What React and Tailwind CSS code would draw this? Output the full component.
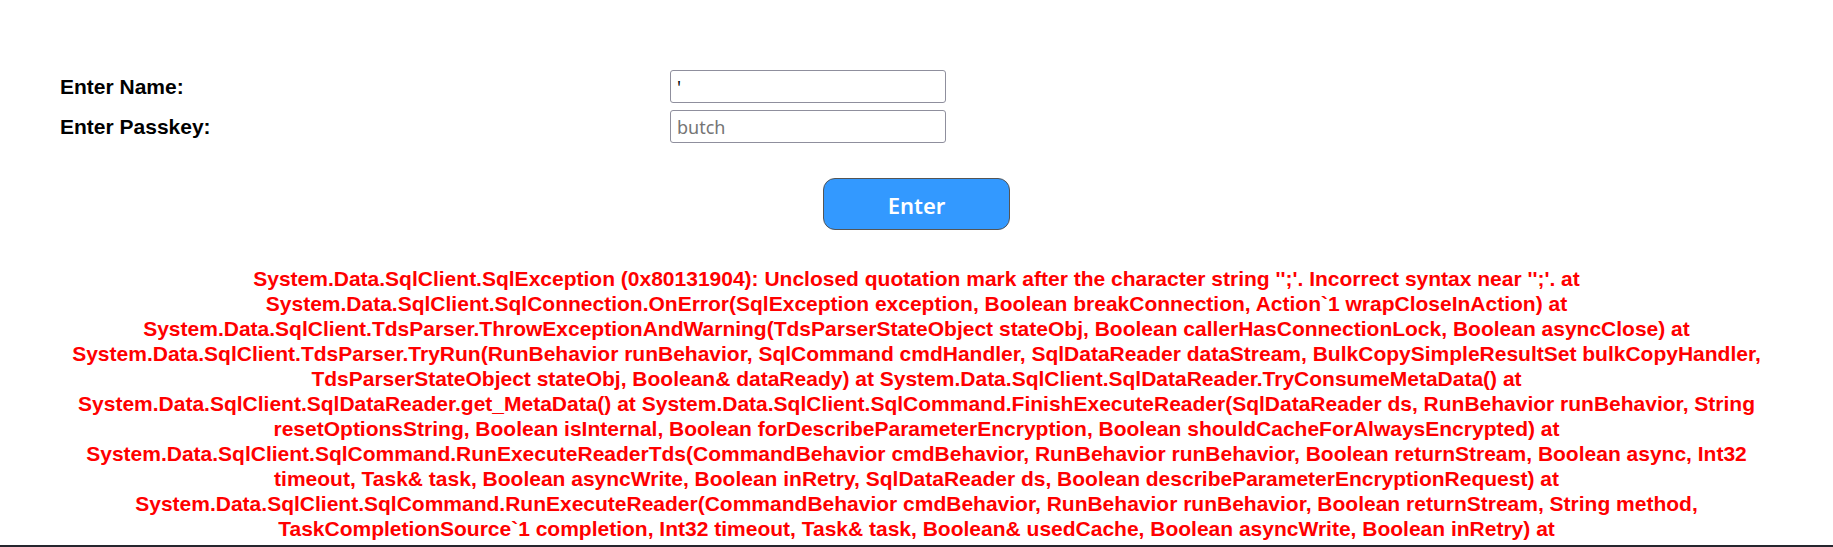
import React from 'react';

const errorText =
  "System.Data.SqlClient.SqlException (0x80131904): Unclosed quotation mark after the character string '';'. Incorrect syntax near '';'. at System.Data.SqlClient.SqlConnection.OnError(SqlException exception, Boolean breakConnection, Action`1 wrapCloseInAction) at System.Data.SqlClient.TdsParser.ThrowExceptionAndWarning(TdsParserStateObject stateObj, Boolean callerHasConnectionLock, Boolean asyncClose) at System.Data.SqlClient.TdsParser.TryRun(RunBehavior runBehavior, SqlCommand cmdHandler, SqlDataReader dataStream, BulkCopySimpleResultSet bulkCopyHandler, TdsParserStateObject stateObj, Boolean& dataReady) at System.Data.SqlClient.SqlDataReader.TryConsumeMetaData() at System.Data.SqlClient.SqlDataReader.get_MetaData() at System.Data.SqlClient.SqlCommand.FinishExecuteReader(SqlDataReader ds, RunBehavior runBehavior, String resetOptionsString, Boolean isInternal, Boolean forDescribeParameterEncryption, Boolean shouldCacheForAlwaysEncrypted) at System.Data.SqlClient.SqlCommand.RunExecuteReaderTds(CommandBehavior cmdBehavior, RunBehavior runBehavior, Boolean returnStream, Boolean async, Int32 timeout, Task& task, Boolean asyncWrite, Boolean inRetry, SqlDataReader ds, Boolean describeParameterEncryptionRequest) at System.Data.SqlClient.SqlCommand.RunExecuteReader(CommandBehavior cmdBehavior, RunBehavior runBehavior, Boolean returnStream, String method, TaskCompletionSource`1 completion, Int32 timeout, Task& task, Boolean& usedCache, Boolean asyncWrite, Boolean inRetry) at";

const App = () => {
  return (
    <div className="min-h-screen bg-white px-[60px] pt-[70px] font-['Liberation_Sans',Arial,sans-serif]">
      {/* login form */}
      <div className="grid grid-cols-[610px_276px] gap-y-[7px]">
        <label className="flex items-center text-[21px] font-bold text-black">Enter Name:</label>
        <input
          type="text"
          defaultValue="'"
          className="h-[33px] rounded-[3px] border border-[#8f8f9d] bg-white px-[6px] font-['Noto_Sans',sans-serif] text-[18px] text-black outline-none"
        />
        <label className="flex items-center text-[21px] font-bold text-black">Enter Passkey:</label>
        <input
          type="password"
          placeholder="butch"
          className="h-[33px] rounded-[3px] border border-[#8f8f9d] bg-white px-[6px] font-['Noto_Sans',sans-serif] text-[18px] text-black outline-none placeholder:text-[#757575]"
        />
      </div>

      <div className="mt-[35px] flex justify-center">
        <button className="h-[52px] w-[187px] rounded-[12px] border border-[#555] bg-[#3399ff] pt-[3px] font-['Noto_Sans',sans-serif] text-[22px] font-semibold text-white">
          Enter
        </button>
      </div>

      {/* error output */}
      <p className="-mx-[10px] mt-[36px] text-center text-[21px] font-bold leading-[25px] text-[#ff0000]">
        {errorText}
      </p>
      <div className="-mx-[60px] mt-[4px] border-t-2 border-[#26262e]" />
    </div>
  );
};

export default App;
